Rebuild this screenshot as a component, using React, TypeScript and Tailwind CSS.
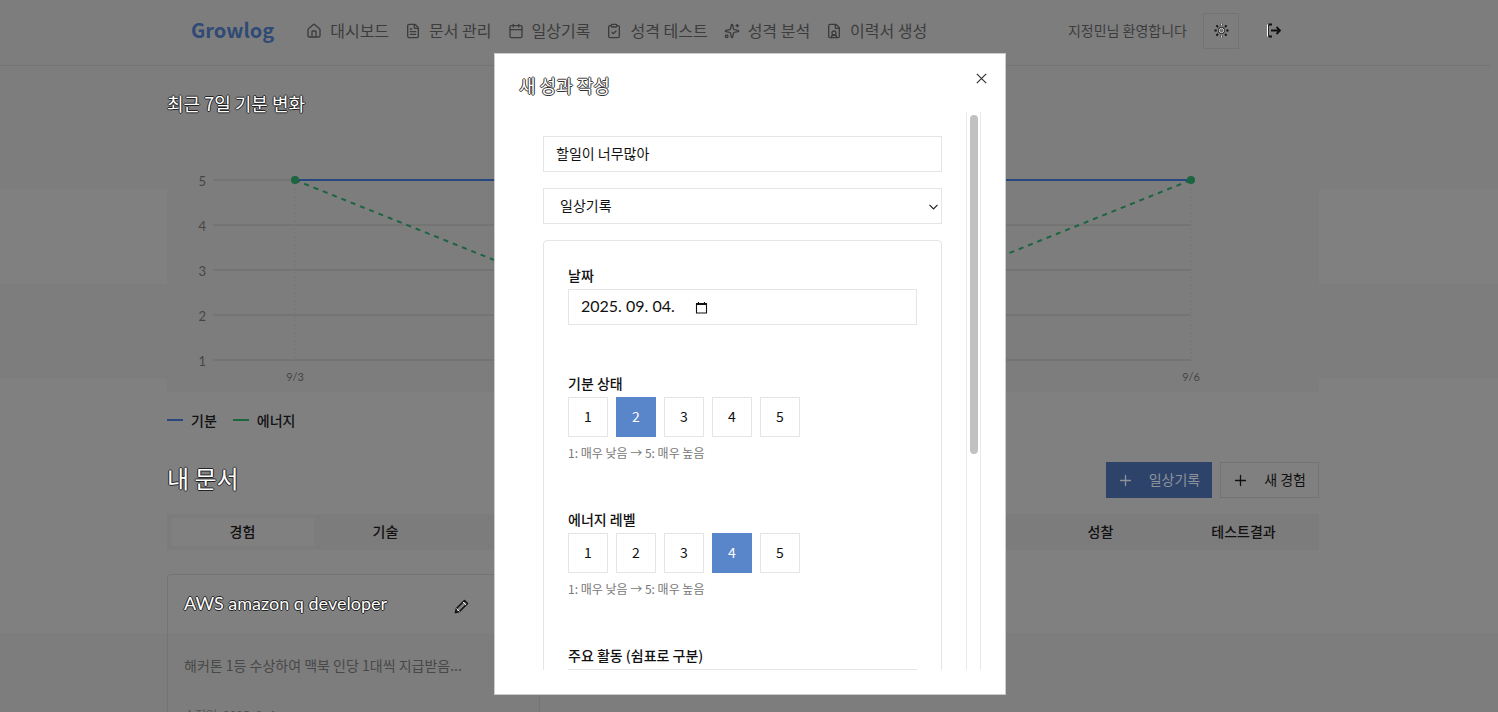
import { ReactNode } from "react";
import { Calendar, ClipboardCheck, FileText, FileUser, House, Sparkles } from "lucide-react";

const nav = [
  { label: "대시보드", Icon: House },
  { label: "문서 관리", Icon: FileText },
  { label: "일상기록", Icon: Calendar },
  { label: "성격 테스트", Icon: ClipboardCheck },
  { label: "성격 분석", Icon: Sparkles },
  { label: "이력서 생성", Icon: FileUser },
];

const tabs = ["경험", "기술", "성과", "학습", "일상", "협업", "성찰", "테스트결과"];

const outlined =
  "text-white [text-shadow:1px_0_0_#222,-1px_0_0_#222,0_1px_0_#222,0_-1px_0_#222]";

function SmallIcon({ children }: { children: ReactNode }) {
  return (
    <svg width="15" height="15" viewBox="0 0 15 15" fill="none" stroke="currentColor" aria-hidden="true">
      {children}
    </svg>
  );
}

function PlusIcon() {
  return (
    <SmallIcon>
      <path d="M7.5 2.5v10M2.5 7.5h10" strokeWidth="1.3" strokeLinecap="round" />
    </SmallIcon>
  );
}

function Header() {
  return (
    <header className="mr-2 border-b border-[#747474] pr-1">
      <div className="mx-auto flex h-[65px] max-w-6xl items-center pr-7 pb-1 pl-6">
        <a href="#" className="pb-0.5 text-xl font-bold text-[#2f4a75]">
          Growlog
        </a>
        <nav className="ml-8 flex items-center gap-4 text-base text-[#3c3c3c]">
          {nav.map(({ label, Icon }) => (
            <a key={label} href="#" className="flex items-center gap-2 whitespace-nowrap">
              <Icon size={16} strokeWidth={2} />
              <span className="pb-0.5">{label}</span>
            </a>
          ))}
        </nav>
        <div className="ml-auto flex items-center gap-4">
          <span className="pb-0.5 text-sm whitespace-nowrap text-[#3c3c3c]">지정민님 환영합니다</span>
          <button
            aria-label="테마 변경"
            className="flex size-9 items-center justify-center border border-[#737373] text-[#111]"
          >
            <SmallIcon>
              <circle cx="7.5" cy="7.5" r="2.4" stroke="#222" strokeWidth="2" />
              <circle cx="7.5" cy="7.5" r="2.2" stroke="#eee" strokeWidth="0.9" />
              <path
                d="M7.5 .5v2.2M7.5 12.3v2.2M.5 7.5h2.2M12.3 7.5h2.2M2.4 2.4l1.6 1.6M11 11l1.6 1.6M2.4 12.6l1.6-1.6M11 4l1.6-1.6"
                strokeWidth="1.8"
              />
              <path d="M7.5 .5v2M7.5 12.5v2" stroke="#eee" />
            </SmallIcon>
          </button>
          <button aria-label="로그아웃" className="flex size-9 items-center justify-center text-[#111]">
            <SmallIcon>
              <path d="M6 1.5H2.5M2.5 13.5H6M5 7.5h8M10.5 4l3.5 3.5L10.5 11" strokeWidth="1.8" />
              <path d="M1.5 1.5v12" stroke="#fff" />
              <path d="M2.5 2v11" strokeWidth="0.8" />
            </SmallIcon>
          </button>
        </div>
      </div>
    </header>
  );
}

function Chart() {
  return (
    <svg
      viewBox="0 0 1152 260"
      className="block w-full font-['Lato','Noto_Sans_CJK_KR',sans-serif]"
      role="img"
      aria-label="최근 7일 기분 변화"
    >
      {[5, 4, 3, 2, 1].map((n, i) => (
        <g key={n}>
          <path d={`M46 ${48 + i * 45}H1024`} stroke="#747474" strokeWidth="2" />
          <text x="39" y={54 + i * 45} fontSize="13" textAnchor="end" fill="#454545">
            {n}
          </text>
        </g>
      ))}
      <path d="M128 48v180M1024 48v180" stroke="#767676" strokeDasharray="2 2" />
      <path d="M128 48H1024" stroke="#27477f" strokeWidth="2" />
      <path d="M128 48L576 228L1024 48" fill="none" stroke="#1b6540" strokeWidth="2" strokeDasharray="5 5" />
      <circle cx="128" cy="48" r="4" fill="#1b6540" />
      <circle cx="1024" cy="48" r="4" fill="#1b6540" />
      <text x="128" y="249" fontSize="11" textAnchor="middle" fill="#454545">
        9/3
      </text>
      <text x="1024" y="249" fontSize="11" textAnchor="middle" fill="#454545">
        9/6
      </text>
    </svg>
  );
}

function Rating({ label, value }: { label: string; value: number }) {
  return (
    <div role="group" aria-label={label}>
      <div className="h-6 text-sm leading-5 font-medium">{label}</div>
      <div className="flex gap-2">
        {[1, 2, 3, 4, 5].map((n) => (
          <button
            key={n}
            aria-pressed={n === value}
            className={
              n === value
                ? "size-10 border border-[#5985cb] bg-[#5985cb] pb-0.5 text-sm text-white"
                : "size-10 border border-[#e5e5e5] pb-0.5 text-sm"
            }
          >
            {n}
          </button>
        ))}
      </div>
      <p className="mt-2 text-xs leading-4 text-[#777]">1: 매우 낮음 → 5: 매우 높음</p>
    </div>
  );
}

function EntryDialog() {
  return (
    <div className="fixed inset-0 flex items-center justify-center pt-9 pl-0.5">
      <div
        role="dialog"
        aria-labelledby="dialog-title"
        className="relative flex h-[calc(100vh-70px)] w-full max-w-lg flex-col border border-[#ccc] bg-white p-6 text-[#111]"
      >
        <h2
          id="dialog-title"
          className="mb-5 text-lg leading-[14px] text-white [text-shadow:1px_0_0_#333,-1px_0_0_#333,0_1px_0_#333,0_-1px_0_#333]"
        >
          새 성과 작성
        </h2>
        <button aria-label="닫기" className="absolute top-4 right-4 flex size-4 items-center justify-center text-[#333]">
          <SmallIcon>
            <path d="M2.8 2.8l9.4 9.4M12.2 2.8l-9.4 9.4" strokeWidth="1.2" />
          </SmallIcon>
        </button>
        <div className="flex min-h-0 flex-1 overflow-hidden">
          <form className="flex min-w-0 flex-1 flex-col gap-4 p-6">
            <input
              aria-label="제목"
              defaultValue="할일이 너무많아"
              className="h-9 w-full shrink-0 border border-[#e5e5e5] px-3 pb-0.5 text-sm"
            />
            <div className="relative shrink-0">
              <select
                aria-label="유형"
                className="block h-9 w-full appearance-none border border-[#e5e5e5] px-4 pb-0.5 text-sm"
              >
                <option>일상기록</option>
              </select>
              <svg
                className="pointer-events-none absolute top-4 right-1"
                width="9"
                height="6"
                fill="none"
                stroke="#222"
                aria-hidden="true"
              >
                <path d="M.5 .8l4 4 4-4" strokeWidth="1.2" />
              </svg>
            </div>
            <div className="flex shrink-0 flex-col gap-12 rounded border border-[#e5e5e5] p-6">
              <div>
                <label htmlFor="date" className="block h-6 text-sm leading-5 font-medium">
                  날짜
                </label>
                <div className="flex h-9 items-center border border-[#e5e5e5] px-3">
                  <input
                    id="date"
                    defaultValue="2025. 09. 04."
                    className="mr-px w-28 pb-0.5 font-['Lato','Noto_Sans_CJK_KR',sans-serif] text-base outline-none"
                  />
                  <svg width="15" height="15" viewBox="0 0 15 15" fill="none" stroke="#111" aria-hidden="true">
                    <path d="M2.5 3.5h10v9.5h-10zM2.5 4.5h10M4.5 2v2M10.5 2v2" strokeWidth="1.1" />
                  </svg>
                </div>
              </div>
              <Rating label="기분 상태" value={2} />
              <Rating label="에너지 레벨" value={4} />
              <div>
                <label htmlFor="activities" className="block h-6 text-sm leading-5 font-medium">
                  주요 활동 (쉼표로 구분)
                </label>
                <input id="activities" className="h-9 w-full border border-[#e5e5e5] px-3 text-sm" />
              </div>
            </div>
          </form>
          <div className="w-[15px] shrink-0 border-x border-[#e8e8e8] px-[3px] pt-[3px]" aria-hidden="true">
            <div className="h-[61%] w-2 rounded-full bg-[#c1c1c1]" />
          </div>
        </div>
      </div>
    </div>
  );
}

export default function App() {
  return (
    <div className="h-screen overflow-hidden bg-[#7d7d7d] font-['Noto_Sans_CJK_KR',sans-serif] text-[#111]">
      <Header />
      <main className="bg-[linear-gradient(#7d7d7d_123px,#808080_123px,#808080_218px,#7d7d7d_218px,#7d7d7d_313px,#808080_313px,#808080_567px,#7d7d7d_567px)] pr-3">
        <div className="mx-auto max-w-6xl">
          <section>
            <div className="bg-[#7d7d7d] pt-6">
              <h2 className={`mb-4 text-lg leading-[26px] ${outlined}`}>최근 7일 기분 변화</h2>
              <Chart />
            </div>
            <div className="flex items-center gap-4 pt-4 text-sm leading-6 font-medium">
              <span className="flex items-center gap-2">
                <i className="h-0.5 w-4 bg-[#27477f]" />
                기분
              </span>
              <span className="flex items-center gap-2">
                <i className="h-0.5 w-4 bg-[#1b6540]" />
                에너지
              </span>
            </div>
          </section>
          <section className="pt-[30px]">
            <div className="flex items-center">
              <h1 className={`pb-1 text-2xl ${outlined}`}>내 문서</h1>
              <div className="ml-auto flex gap-2 text-sm">
                <button className="flex h-9 items-center gap-4 bg-[#2d4369] px-3 text-[#8e939b]">
                  <PlusIcon />
                  <span className="pb-0.5">일상기록</span>
                </button>
                <button className="flex h-9 items-center gap-4 border border-[#737373] px-3">
                  <PlusIcon />
                  <span className="pb-0.5">새 경험</span>
                </button>
              </div>
            </div>
            <div role="tablist" className="mt-4 grid h-9 grid-cols-8 bg-[#7c7c7c] p-1 text-sm font-medium">
              {tabs.map((t, i) => (
                <button key={t} role="tab" aria-selected={i === 0} className={i === 0 ? "bg-[#808080] pb-0.5" : "pb-0.5"}>
                  {t}
                </button>
              ))}
            </div>
            <div className="mt-6 grid grid-cols-3 gap-4">
              <article className="h-60 rounded border border-[#747474] p-4">
                <div className="flex h-8 items-start justify-between">
                  <h3 className={`font-['Lato','Noto_Sans_CJK_KR',sans-serif] text-lg leading-6 ${outlined}`}>
                    AWS amazon q developer
                  </h3>
                  <button aria-label="수정" className="mt-2 mr-[54px] text-[#111]">
                    <SmallIcon>
                      <path d="M1.5 13.5l1-4 8-8 3 3-8 8z" fill="#808080" strokeWidth="1.6" strokeLinejoin="round" />
                      <path d="M9 3l3 3M2.5 9.5l3 3" stroke="#eee" strokeWidth="1" />
                    </SmallIcon>
                  </button>
                </div>
                <p className="mt-7 text-sm leading-7 text-[#484848]">해커톤 1등 수상하여 맥북 인당 1대씩 지급받음...</p>
                <p className="mt-7 text-xs text-[#555]">수정일: 2025. 9. 4.</p>
              </article>
            </div>
          </section>
        </div>
      </main>
      <EntryDialog />
    </div>
  );
}
